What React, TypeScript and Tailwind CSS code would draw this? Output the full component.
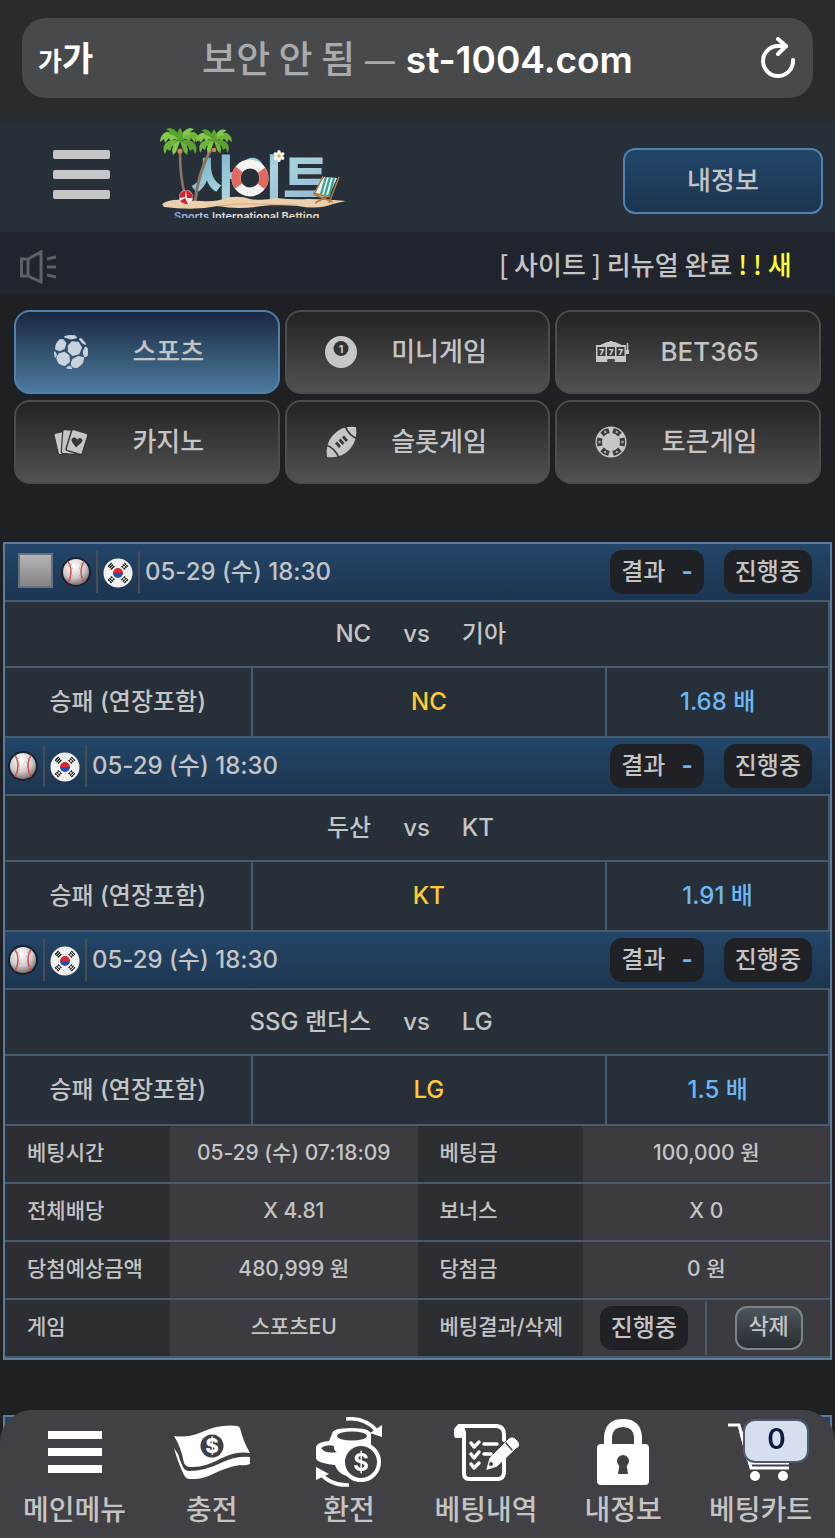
import type {ReactNode} from "react";

type Match = {
    home: string;
    away: string;
    pick: string;
    odds: string;
    checkable?: boolean;
};

const DATE = "05-29 (수) 18:30";

const matches: Match[] = [
    {home: "NC", away: "기아", pick: "NC", odds: "1.68", checkable: true},
    {home: "두산", away: "KT", pick: "KT", odds: "1.91"},
    {home: "SSG 랜더스", away: "LG", pick: "LG", odds: "1.5"},
];

const summary = [
    ["베팅시간", "05-29 (수) 07:18:09", "베팅금", "100,000 원"],
    ["전체배당", "X 4.81", "보너스", "X 0"],
    ["당첨예상금액", "480,999 원", "당첨금", "0 원"],
];

/* ---------- logo ---------- */

const FRONDS = [
    "M0 0Q6 -10 14 -9Q20 -6 20 1L16 -2L15 2L11 -3L9 1L6 -2Z",
    "M0 0Q-6 -10 -14 -9Q-20 -6 -20 1L-16 -2L-15 2L-11 -3L-9 1L-6 -2Z",
    "M0 0Q10 -3 15 3Q18 8 15 13L13 8L10 10L8 5L5 6Z",
    "M0 0Q-10 -3 -15 3Q-18 8 -15 13L-13 8L-10 10L-8 5L-5 6Z",
    "M0 0Q2 -12 10 -13L14 -12L10 -9L11 -7L5 -5Z",
    "M0 0Q-2 -12 -10 -13L-14 -12L-10 -9L-11 -7L-5 -5Z",
    "M0 0Q7 3 8 9L7 14L4 11L2 6Z",
    "M0 0Q-7 3 -8 9L-7 14L-4 11L-2 6Z",
    "M-3 -1Q-4 -9 0 -13Q4 -9 3 -1Z",
];

const Palm = ({x, y, s}: { x: number; y: number; s: number }) => (
    <g transform={`translate(${x} ${y}) scale(${s})`}>
        {FRONDS.map((d, i) => (
            <path key={d} d={d} fill={["#6db53a", "#85c94c", "#5ba231"][i % 3]}/>
        ))}
        <circle cx="0" cy="10" r="2.600" fill="#c98c50"/>
    </g>
);

const Logo = () => (
    <svg viewBox="0 0 190 91" className="h-[91px] w-[190px]" role="img" aria-label="사이트">
        <defs>
            <linearGradient id="sea" x1="0" y1="0" x2="1" y2="1">
                <stop offset="0" stopColor="#5fa6c6"/>
                <stop offset=".5" stopColor="#a9d3dc"/>
                <stop offset="1" stopColor="#8fb2d0"/>
            </linearGradient>
            <linearGradient id="tagline" x1="0" y1="0" x2="1" y2="0">
                <stop offset="0" stopColor="#7f9de0"/>
                <stop offset=".4" stopColor="#e6e8f0"/>
                <stop offset="1" stopColor="#f0d3b0"/>
            </linearGradient>
        </defs>
        <text x="33" y="70" fontSize="50" fontFamily="'Noto Sans CJK KR', sans-serif" fontWeight="900"
              fill="url(#sea)">사이트
        </text>
        <path d="M22 26Q22 50 27 68" stroke="#8a7562" strokeWidth="2.600" fill="none"/>
        <path d="M53 22Q40 46 37 75" stroke="#8a7562" strokeWidth="3" fill="none"/>
        <Palm x={22} y={14} s={1}/>
        <Palm x={56} y={14} s={0.9}/>
        <circle cx="92" cy="51" r="12" fill="#272f38"/>
        <circle cx="92" cy="51" r="14" fill="none" stroke="#f4f4f2" strokeWidth="9"/>
        <circle cx="92" cy="51" r="14" fill="none" stroke="#e2695f" strokeWidth="9"
                strokeDasharray="18 26" strokeDashoffset="9"/>
        <path
            d="M4 77Q12 72 24 73Q34 74 44 74Q58 75 68 71Q82 68 92 72Q106 74 118 71Q136 73 150 72Q170 72 188 74Q178 76 175 77Q160 83 140 79Q120 77 104 79Q80 83 60 79Q36 84 6 80Z"
            fill="#ecd0ac"
        />
        <path d="M60 79Q80 76 100 77T140 78" stroke="#cfa883" strokeWidth="1" fill="none"/>
        <circle cx="28" cy="70" r="7" fill="#f5f1ef"/>
        <path d="M28 63Q21 65 21 71L27 70ZM28 63Q35 65 35 71L29 71ZM27 71L22 74Q26 78 30 77Z" fill="#d3252f"/>
        {[0, 60, 120, 180, 240, 300].map((a) => (
            <ellipse key={a} cx="121" cy="25.600" rx="1.800" ry="2.600" fill="#fff"
                     transform={`rotate(${a} 121 29)`}/>
        ))}
        <circle cx="121" cy="29" r="1.800" fill="#efb12b"/>
        <path d="M166 50L179 51L171 69L156 66Z" fill="#e8f4ee"/>
        <path d="M168 50L163 67M172 50L167 68M176 51L171 69" stroke="#2fa38f" strokeWidth="2.200"/>
        <path d="M165 49L156 68M181 50L171 76M155 66L172 70M157 68L175 75M172 68L157 76" stroke="#b5793b"
              strokeWidth="1.500" fill="none"/>
        <text x="16" y="93" fontSize="11" fontWeight="600" fontFamily="Inter, sans-serif" fill="url(#tagline)">
            Sports International Betting
        </text>
    </svg>
);

/* ---------- category icons ---------- */

const SoccerIcon = () => (
    <svg viewBox="0 0 100 100" className="h-[34px] w-[34px]" fill="#c9d3de" stroke="#c9d3de" strokeWidth="3"
         strokeLinejoin="round">
        <clipPath id="ball">
            <circle cx="50" cy="50" r="50"/>
        </clipPath>
        <g clipPath="url(#ball)">
            <path d="M42 32L53 20L71 21L81 37L73 55L55 60L42 48Z"/>
            <path d="M6 26L14 13L27 14L35 24L31 39L18 46L5 42Z"/>
            <path d="M14 56L31 51L44 61L45 79L31 90L14 84L8 68Z"/>
            <path d="M56 71L72 63L87 67L84 82L68 97L53 93L51 82Z"/>
            <path d="M92 36L86 50L90 64L100 60L101 40Z"/>
            <path d="M31 6L36 -2L60 -2L66 8L50 12Z"/>
            <path d="M75 12L82 8L98 26L92 27L83 23Z"/>
            <path d="M0 50L4 51L7 60L3 66L-2 60Z"/>
            <path d="M38 96L46 92L52 98L50 104L38 102Z"/>
        </g>
    </svg>
);

const BilliardIcon = () => (
    <svg viewBox="0 0 34 34" className="h-[34px] w-[34px]">
        <circle cx="16" cy="17" r="16" fill="#c6c6c6"/>
        <circle cx="16" cy="13.500" r="7.500" fill="#333"/>
        <text x="16" y="17.500" textAnchor="middle" fontSize="11" fontWeight="700" fontFamily="Inter, sans-serif"
              fill="#c6c6c6">1
        </text>
    </svg>
);

const SlotIcon = () => (
    <svg viewBox="0 0 34 34" className="h-[34px] w-[34px]">
        <path d="M12 7H14Q16 4.500 18 7H20L26 9.500V11H6V9.500Z" fill="#c6c6c6"/>
        <path d="M1 10H31V27H1Z" fill="#c6c6c6"/>
        <path d="M32.500 18V8" stroke="#c6c6c6" strokeWidth="1.500"/>
        <path d="M31 15H34V19H31Z" fill="#c6c6c6"/>
        <path d="M2.500 12H10.500V21H2.500ZM12 12H20V21H12ZM21.500 12H29.500V21H21.500Z" fill="#3a3a3a"/>
        <g fill="#d6d6d6" fontSize="8" fontWeight="800" fontFamily="Inter, sans-serif" textAnchor="middle">
            <text x="6.500" y="19.500">7</text>
            <text x="16" y="19.500">7</text>
            <text x="25.500" y="19.500">7</text>
        </g>
        <rect x="12" y="24" width="8" height="3" rx="1.500" fill="#444"/>
    </svg>
);

const CardsIcon = () => (
    <svg viewBox="0 0 34 34" className="h-[34px] w-[34px]" fill="#c6c6c6" stroke="#363636" strokeWidth="1.200">
        <rect x="2" y="7" width="13" height="22" rx="2" transform="rotate(-13 8 18)"/>
        <rect x="8" y="5" width="14" height="24" rx="2" transform="rotate(4 15 17)"/>
        <rect x="14.500" y="6" width="17" height="22" rx="2" transform="rotate(17 23 17)" strokeWidth="1.500"/>
        <path
            d="M22 22.500L18 17Q16.500 13.500 19.500 12.500Q22 12 23 14.500Q25.500 12 27.500 13.500Q29.500 15.500 27 18Z"
            fill="#363636" stroke="none"/>
    </svg>
);

const FootballIcon = () => (
    <svg viewBox="0 0 34 34" className="h-[34px] w-[34px]">
        <path d="M2 32Q0 19 8 10Q17 0 31 2Q33 15 25 24Q16 34 2 32Z" fill="#c6c6c6"/>
        <path d="M1 20Q10 23 14 33M20 1Q24 11 33 14" stroke="#3a3a3a" strokeWidth="1.800" fill="none"/>
        <path d="M11 17.500L15 22M14.500 14.500L18.500 19M18 11.500L22 16" stroke="#3a3a3a" strokeWidth="2.800"/>
    </svg>
);

const ChipIcon = () => (
    <svg viewBox="0 0 34 34" className="h-[34px] w-[34px]">
        <circle cx="16" cy="17" r="15.500" fill="#c6c6c6"/>
        {[30, 90, 150, 210, 270, 330].map((a) => (
            <g key={a} transform={`rotate(${a} 16 17)`}>
                <path d="M11.500 3.500Q16 2 20.500 3.500L19.500 8.500Q16 7.500 12.500 8.500Z" fill="#3d3d3d"/>
                <circle cx="16" cy="5.500" r="1.200" fill="#b0b0b0"/>
            </g>
        ))}
    </svg>
);

const categories: { label: string; icon: ReactNode; active?: boolean }[] = [
    {label: "스포츠", icon: <SoccerIcon/>, active: true},
    {label: "미니게임", icon: <BilliardIcon/>},
    {label: "BET365", icon: <SlotIcon/>},
    {label: "카지노", icon: <CardsIcon/>},
    {label: "슬롯게임", icon: <FootballIcon/>},
    {label: "토큰게임", icon: <ChipIcon/>},
];

/* ---------- match icons ---------- */

const Baseball = () => (
    <svg viewBox="0 0 30 30" className="h-[30px] w-[30px]" role="img" aria-label="야구">
        <defs>
            <radialGradient id="leather" cx=".42" cy=".3" r=".75">
                <stop offset="0" stopColor="#fff"/>
                <stop offset=".55" stopColor="#cfcbca"/>
                <stop offset="1" stopColor="#5c5959"/>
            </radialGradient>
        </defs>
        <circle cx="15" cy="15" r="14" fill="url(#leather)" stroke="#1b2029" strokeWidth="2"/>
        <path d="M7 4Q13 15 7 26M23 4Q17 15 23 26" stroke="#d0484b" strokeWidth="1.500" fill="none"/>
        <path d="M8 8L11 7M9 12L12 11M9 18L12 19M8 22L11 23M22 8L19 7M21 12L18 11M21 18L18 19M22 22L19 23"
              stroke="#d98a8a" strokeWidth=".8"/>
    </svg>
);

const KoreaFlag = () => (
    <svg viewBox="0 0 30 30" className="mt-[2px] h-[30px] w-[30px]" role="img" aria-label="대한민국">
        <circle cx="15" cy="15" r="14.500" fill="#f2f2f2"/>
        <path d="M10 15A5 5 0 0 1 20 15Z" fill="#d42a35"/>
        <path d="M10 15A5 5 0 0 0 20 15Z" fill="#2250b4"/>
        {[-45, 45, 135, 225].map((a) => (
            <path key={a} transform={`rotate(${a} 15 15)`} d="M12.500 3.500H17.500M12.500 5.500H17.500M12.500 7.500H17.500"
                  stroke="#222" strokeWidth="1.400" strokeDasharray={a === -45 ? undefined : "2.200 .6"}/>
        ))}
    </svg>
);

/* ---------- bottom bar icons ---------- */

const MenuIcon = () => (
    <svg viewBox="0 0 54 42" className="h-[42px] w-[54px]" fill="#fff">
        <path d="M0 0H54V8H0ZM0 17H54V25H0ZM0 34H54V42H0Z"/>
    </svg>
);

const MoneyIcon = () => (
    <svg viewBox="0 0 76 54" className="h-[54px] w-[76px]" fill="#fff">
        <path
            d="M0 11Q14 13 28 7Q46 -1 63 1Q65 1 66 3Q69 16 76 28Q63 26 48 33Q30 43 16 42Q12 42 10 38Q7 22 0 11Z"/>
        <path
            d="M0 23L4 29Q6 36 9 42Q11 46 15 46Q31 46 49 37Q62 31 76 32V39Q71 41 66 40Q53 42 39 49Q26 55 16 54Q12 54 10 50Q4 38 0 23Z"/>
        <circle cx="38" cy="21" r="11.500" fill="#414045"/>
        <text x="38" y="28" textAnchor="middle" fontSize="20" fontWeight="800" fontFamily="Inter, sans-serif">$
        </text>
    </svg>
);

const ExchangeIcon = () => (
    <svg viewBox="0 0 68 70" className="h-[70px] w-[68px]" fill="none" stroke="#fff">
        <path d="M1 30Q2 25 14 24L17 17Q17 11 36 11T56 17V34L40 60Q24 60 20 48Q1 46 1 41Z" fill="#fff"
              stroke="none"/>
        <ellipse cx="37" cy="19" rx="15" ry="4.500" fill="#414045" stroke="none"/>
        <path d="M6 31Q11 27 19 29Q18 33 22 35Q10 37 6 31Z" fill="#414045" stroke="none"/>
        <path d="M31 2Q50 0 62 14" strokeWidth="3.600"/>
        <path d="M67 8V20L55 16Z" fill="#fff" stroke="none"/>
        <path d="M5 56Q16 69 34 68" strokeWidth="3.600"/>
        <path d="M1 63V50L14 57Z" fill="#fff" stroke="none"/>
        <circle cx="46" cy="45" r="18" fill="#414045" strokeWidth="4"/>
        <text x="46" y="53.500" textAnchor="middle" fontSize="24" fontWeight="700" fontFamily="Inter, sans-serif"
              fill="#fff" stroke="none">$
        </text>
    </svg>
);

const HistoryIcon = () => (
    <svg viewBox="0 0 66 58" className="h-[58px] w-[66px]" fill="none" stroke="#fff" strokeLinecap="round"
         strokeLinejoin="round">
        <path d="M6 3H44Q51 4 51 11V17M51 36V50Q50 56 45 56H16Q11 56 11 50V10Q10 4 6 3" strokeWidth="4"/>
        <path d="M2 14Q-1 2 8 2Q13 4 12 14Z" fill="#fff" strokeWidth="1"/>
        <path d="M18 20L21 24L26 19M18 31L21 35L26 29M18 41L21 45L26 40" strokeWidth="3.500"/>
        <path d="M31 21H44M31 31H38" strokeWidth="3.500"/>
        <path d="M34 46L37 35L56 16Q60 13 64 18T63 25L44 43Z" fill="#fff" strokeWidth="1"/>
        <path d="M53 20L59 27" stroke="#414045" strokeWidth="1.500"/>
        <circle cx="38" cy="41" r="2" fill="#414045" stroke="none"/>
    </svg>
);

const LockIcon = () => (
    <svg viewBox="0 0 52 66" className="h-[66px] w-[52px]">
        <path d="M11 30V18Q12 4 26 4Q40 4 41 18V30" stroke="#fff" strokeWidth="8" fill="none"/>
        <rect x="0" y="25" width="52" height="41" rx="4" fill="#fff"/>
        <circle cx="26" cy="42" r="6" fill="#414045"/>
        <path d="M23 42H29L31 55H21Z" fill="#414045"/>
    </svg>
);

const CartIcon = () => (
    <svg viewBox="0 0 66 58" className="h-[58px] w-[66px]" fill="none" stroke="#fff">
        <path d="M1 2H12L24 45H62" strokeWidth="3"/>
        <path d="M14 10H64L58 36H21ZM22 40H62" strokeWidth="3"/>
        <path d="M26 10V36M36 10V36M46 10V36M56 10V36M16 22H62" strokeWidth="2"/>
        <circle cx="28" cy="53" r="5" fill="#fff" stroke="none"/>
        <circle cx="56" cy="53" r="5" fill="#fff" stroke="none"/>
    </svg>
);

const bottomItems: { label: string; icon: ReactNode; badge?: number }[] = [
    {label: "메인메뉴", icon: <MenuIcon/>},
    {label: "충전", icon: <MoneyIcon/>},
    {label: "환전", icon: <ExchangeIcon/>},
    {label: "베팅내역", icon: <HistoryIcon/>},
    {label: "내정보", icon: <LockIcon/>},
    {label: "베팅카트", icon: <CartIcon/>, badge: 0},
];

/* ---------- sections ---------- */

const BrowserBar = () => (
    <div className="bg-[#2a2b2d] px-[22px] pt-[18px] pb-[23px]">
        <div className="grid h-20 grid-cols-[1fr_auto_1fr] items-center rounded-3xl bg-[#48494b] px-4">
            <button type="button" className="flex items-baseline justify-self-start font-bold text-white">
                <span className="text-[26px]">가</span>
                <span className="text-[34px]">가</span>
            </button>
            <p className="pt-[2px] text-[37px] font-semibold whitespace-nowrap text-white">
                <span className="font-['Noto_Sans_CJK_KR'] font-medium text-[#a9aaac]">보안 안 됨 —</span> st-1004.com
            </p>
            <button type="button" aria-label="새로고침" className="justify-self-end">
                <svg viewBox="0 0 36 42" className="h-[42px] w-9" fill="none" stroke="#fff" strokeWidth="4"
                     strokeLinecap="round" strokeLinejoin="round">
                    <path d="M32 23A15 15 0 1 1 17 9H25"/>
                    <path d="M17 2L25 9L17 17"/>
                </svg>
            </button>
        </div>
    </div>
);

const Header = () => (
    <header className="flex h-[111px] items-center bg-[#272f38] pr-3 pl-[53px]">
        <button type="button" aria-label="메뉴" className="mb-1 flex w-[57px] flex-col gap-[11px]">
            <span className="h-[9px] w-full rounded-xs bg-[#c6c6c6]"/>
            <span className="h-[9px] w-full rounded-xs bg-[#c6c6c6]"/>
            <span className="h-[9px] w-full rounded-xs bg-[#c6c6c6]"/>
        </button>
        <a href="#" className="mb-2 ml-12">
            <Logo/>
        </a>
        <button
            type="button"
            className="mt-2 ml-auto h-[66px] w-[200px] rounded-xl border-2 border-[#4f82b0] bg-linear-to-b from-[#234669] to-[#1c3550] text-[26px]"
        >
            내정보
        </button>
    </header>
);

const Notice = () => (
    <div className="flex h-[62px] items-center justify-between bg-[#20252d] pr-[42px] pl-5">
        <svg viewBox="0 0 38 34" className="mt-2 h-[34px] w-[38px]" fill="none" stroke="#5d6165" strokeWidth="3">
            <path d="M1.500 9H8V26H1.500ZM8 9L21 2V32L8 26"/>
            <path d="M27 9L36 7M27 17H36M27 25L36 27"/>
        </svg>
        <p className="w-[294px] overflow-hidden font-['Noto_Sans_CJK_KR',sans-serif] text-[26px] whitespace-nowrap">
            [ 사이트 ] 리뉴얼 완료 <span className="text-[#ffff2e]">! ! 새</span>
        </p>
    </div>
);

const Categories = () => (
    <nav className="grid grid-cols-3 gap-x-[5px] gap-y-[6px] px-[14px] pt-4">
        {categories.map(({label, icon, active}) => (
            <button
                key={label}
                type="button"
                className={`flex h-[84px] items-center rounded-2xl border-2 bg-linear-to-b pr-[29px] pl-[38px] text-[26px] ${
                    active
                        ? "border-[#4f7fac] from-[#1c2742] via-[#32536f] to-[#4d7a9f]"
                        : "border-[#4c4c4c] from-[#242424] to-[#525252]"
                }`}
            >
                {icon}
                <span className="flex-1 pb-[2px]">{label}</span>
            </button>
        ))}
    </nav>
);

const Status = ({children}: { children: ReactNode }) => (
    <span className="flex h-11 items-center rounded-xl bg-[#202124] px-[11px] text-2xl whitespace-pre">{children}</span>
);

const MatchHeader = ({checkable}: { checkable?: boolean }) => (
    <div className="flex items-center pr-[18px] pl-[3px]">
        {checkable && (
            <input
                type="checkbox"
                aria-label="선택"
                className="mr-2 mb-1 ml-[10px] h-[35px] w-[35px] appearance-none border-2 border-[#66707c] bg-linear-to-b from-[#b4b4b4] to-[#858585]"
            />
        )}
        <Baseball/>
        <span className="mx-[5px] h-[42px] w-[2px] bg-[#4b4d50]"/>
        <KoreaFlag/>
        <span className="mx-[5px] h-[42px] w-[2px] bg-[#4b4d50]"/>
        <span className="text-2xl">{DATE}</span>
        <div className="ml-auto flex gap-5">
            <Status>결과 <span className="pl-1 font-bold text-[#6cb8f5]"> -</span></Status>
            <Status>진행중</Status>
        </div>
    </div>
);

const BetCard = () => (
    <section className="mx-[3px] border-2 border-[#5f7b99]">
        <table className="w-full table-fixed border-separate border-spacing-0 text-center text-2xl">
            <colgroup>
                <col className="w-[30%]"/>
                <col className="w-[43%]"/>
                <col className="w-[27%]"/>
            </colgroup>
            {matches.map((m) => (
                <tbody key={m.home}>
                <tr>
                    <th colSpan={3}
                        className="h-[58px] border-b-2 border-[#465a70] bg-linear-to-b from-[#234669] to-[#1c3550] font-medium">
                        <MatchHeader checkable={m.checkable}/>
                    </th>
                </tr>
                <tr>
                    <td colSpan={3} className="h-[66px] border-r-2 border-b-2 border-[#465a70] bg-[#272f38]">
                        <div className="grid grid-cols-[1fr_auto_1fr] gap-8">
                            <span className="text-right">{m.home}</span>
                            <span>vs</span>
                            <span className="text-left">{m.away}</span>
                        </div>
                    </td>
                </tr>
                <tr>
                    <td className="h-[70px] border-r-2 border-b-2 border-[#465a70] bg-[#272f38]">
                        승패 (연장포함)
                    </td>
                    <td className="border-r-2 border-b-2 border-[#465a70] bg-[#272f38] text-[#ffcb33]">{m.pick}</td>
                    <td className="border-r-2 border-b-2 border-[#465a70] bg-[#272f38] text-[#6cb8f5]">{m.odds} 배
                    </td>
                </tr>
                </tbody>
            ))}
        </table>

        <table className="w-full table-fixed border-separate border-spacing-0 text-[21px] whitespace-nowrap">
            <colgroup>
                <col className="w-[20%]"/>
                <col className="w-[30%]"/>
                <col className="w-[20%]"/>
                <col className="w-[30%]"/>
            </colgroup>
            <tbody>
            {summary.map(([k1, v1, k2, v2]) => (
                <tr key={k1}>
                    <th className="h-[58px] border-b-2 border-[#465a70] bg-[#2d2e31] pb-[2px] pl-[22px] text-left font-medium">{k1}</th>
                    <td className="border-b-2 border-[#465a70] bg-[#3b3b40] pb-[2px] text-center">{v1}</td>
                    <th className="border-b-2 border-[#465a70] bg-[#2d2e31] pb-[2px] pl-[22px] text-left font-medium">{k2}</th>
                    <td className="border-b-2 border-[#465a70] bg-[#3b3b40] pb-[2px] text-center">{v2}</td>
                </tr>
            ))}
            <tr>
                <th className="h-[58px] border-b-2 border-[#465a70] bg-[#2d2e31] pb-[2px] pl-[22px] text-left font-medium">게임</th>
                <td className="border-b-2 border-[#465a70] bg-[#3b3b40] pb-[2px] text-center">스포츠EU</td>
                <th className="border-b-2 border-[#465a70] bg-[#2d2e31] pb-[2px] pl-[22px] text-left font-medium">베팅결과/삭제</th>
                <td className="border-b-2 border-[#465a70] bg-[#3b3b40]">
                    <div className="flex h-[54px] items-center">
                        <div className="flex h-full flex-1 items-center justify-center border-r-2 border-[#465a70]">
                            <Status>진행중</Status>
                        </div>
                        <div className="flex flex-1 justify-center">
                            <button
                                type="button"
                                className="h-11 w-[68px] rounded-xl border-2 border-[#7d8488] bg-linear-to-b from-[#4d565d] to-[#282d31] pb-1 text-[22px]"
                            >
                                삭제
                            </button>
                        </div>
                    </div>
                </td>
            </tr>
            </tbody>
        </table>
    </section>
);

const BottomBar = () => (
    <nav className="fixed inset-x-0 bottom-0 grid h-32 grid-cols-6 rounded-t-[32px] bg-[#414045] px-[6px]">
        {bottomItems.map(({label, icon, badge}) => (
            <a key={label} href="#" className="flex flex-col items-center text-[28px] leading-8 whitespace-nowrap">
                <span className="relative flex h-[84px] items-center">
                    {icon}
                    {badge !== undefined && (
                        <span
                            className="absolute top-[9px] left-4 flex h-[44px] w-[66px] items-center justify-center rounded-xl border-2 border-[#4c5c6e] bg-[#d5dff0] pb-1 font-semibold text-[#101a3c]">
                            {badge}
                        </span>
                    )}
                </span>
                {label}
            </a>
        ))}
    </nav>
);

export default function App() {
    return (
        <div
            className="min-h-screen bg-[#1f2024] font-[Inter,'Noto_Sans_CJK_KR',sans-serif] font-medium text-[#c4c4c4]">
            <BrowserBar/>
            <Header/>
            <Notice/>
            <Categories/>
            <main className="flex flex-col gap-[55px] pt-[58px]">
                <BetCard/>
                {/* next bet slip, peeking out behind the bottom bar */}
                <section
                    className="mx-[3px] h-[60px] border-2 border-[#5f7b99] bg-linear-to-b from-[#234669] to-[#1c3550]"/>
            </main>
            <BottomBar/>
        </div>
    );
}
